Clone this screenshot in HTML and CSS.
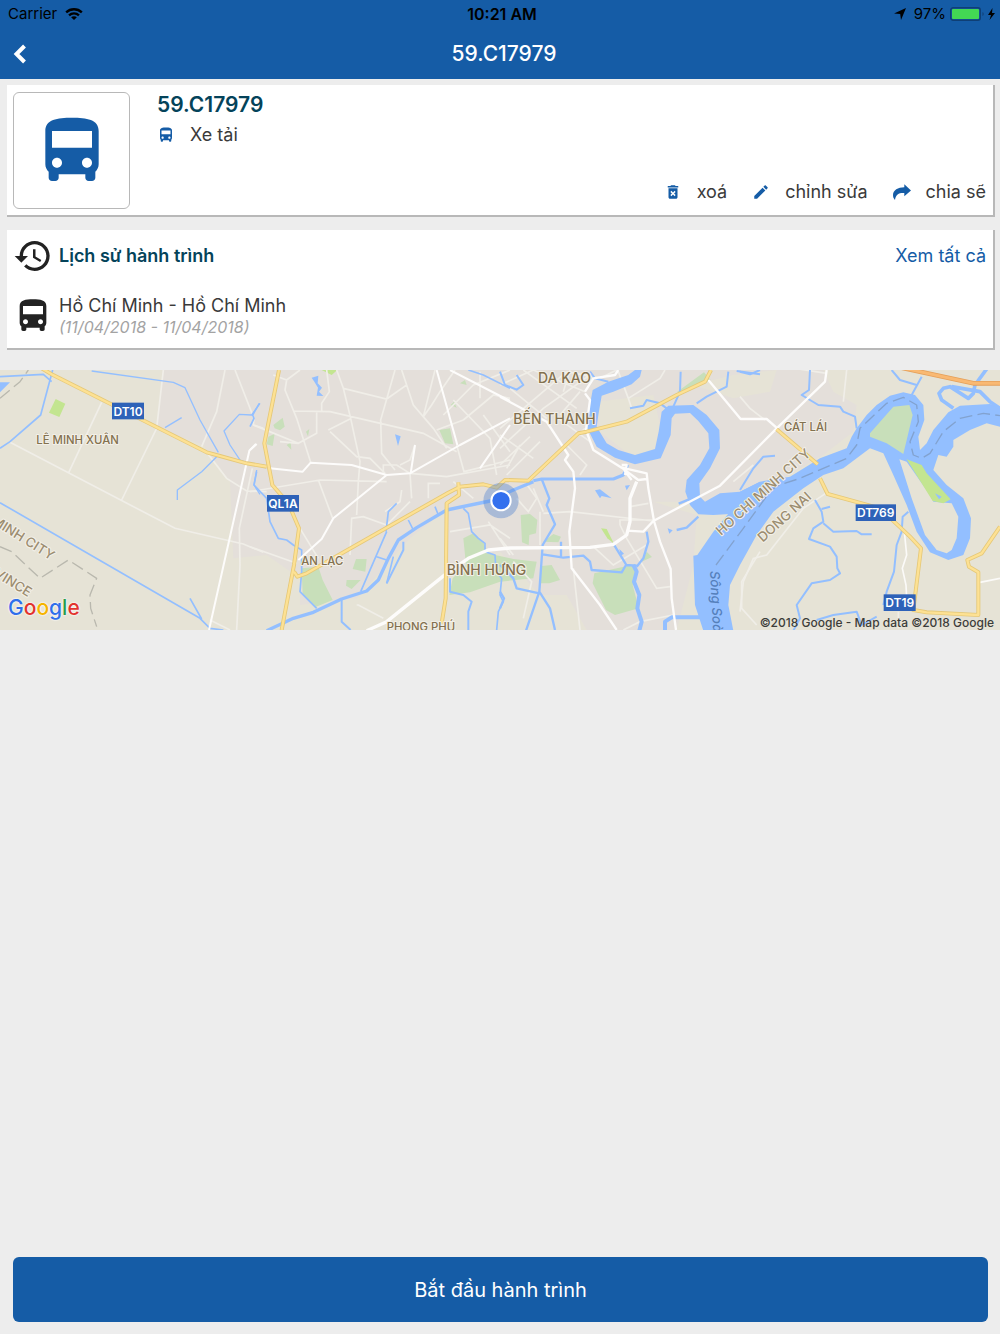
FILE: index.html
```html
<!DOCTYPE html>
<html lang="vi">
<head>
<meta charset="utf-8">
<meta name="viewport" content="width=device-width, initial-scale=1">
<title>59.C17979</title>
<link rel="stylesheet" href="styles.css">
</head>
<body>
<svg class="symbols" aria-hidden="true">
  <symbol id="bus" viewBox="0 0 24 24"><path d="M4 16c0 .88.39 1.67 1 2.22V20c0 .55.45 1 1 1h1c.55 0 1-.45 1-1v-1h8v1c0 .55.45 1 1 1h1c.55 0 1-.45 1-1v-1.780c.61-.55 1-1.340 1-2.220V6c0-3.500-3.580-4-8-4s-8 .5-8 4v10zm3.500 1c-.83 0-1.500-.67-1.500-1.500S6.670 14 7.500 14s1.500.67 1.500 1.500S8.330 17 7.500 17zm9 0c-.83 0-1.500-.67-1.500-1.500s.67-1.500 1.500-1.500 1.500.67 1.500 1.500-.67 1.500-1.500 1.500zm1.500-6H6V6h12v5z"/></symbol>
  <symbol id="history" viewBox="0 0 24 24"><path d="M13 3c-4.970 0-9 4.030-9 9H1l3.890 3.890.07.14L9 12H6c0-3.870 3.130-7 7-7s7 3.130 7 7-3.130 7-7 7c-1.930 0-3.680-.79-4.940-2.060l-1.420 1.420C8.270 19.990 10.510 21 13 21c4.970 0 9-4.030 9-9s-4.030-9-9-9zm-1 5v5l4.280 2.540.72-1.210-3.500-2.080V8H12z"/></symbol>
  <symbol id="trash" viewBox="0 0 24 24"><path d="M6 19c0 1.100.9 2 2 2h8c1.100 0 2-.9 2-2V7H6v12zm2.460-7.120l1.410-1.410L12 12.590l2.120-2.120 1.410 1.410L13.410 14l2.120 2.120-1.410 1.410L12 15.410l-2.120 2.120-1.410-1.410L10.590 14l-2.130-2.120zM15.500 4l-1-1h-5l-1 1H5v2h14V4z"/></symbol>
  <symbol id="pencil" viewBox="0 0 24 24"><path d="M3 17.250V21h3.750L17.810 9.940l-3.750-3.750L3 17.250zM20.710 7.040c.39-.39.39-1.020 0-1.410l-2.340-2.340c-.39-.39-1.020-.39-1.410 0l-1.830 1.830 3.750 3.750 1.830-1.830z"/></symbol>
  <symbol id="share" viewBox="0 0 18 18"><path d="M11.300 1.200L18 7.400l-6.700 5.800V10C6.500 9.600 2.700 11 2 17 .6 15.500 0 14 0 12 0 7 5 4.200 11.300 4.200z"/></symbol>
</svg>

<div class="screen">
  <header class="top">
    <div class="status">
      <div class="status-side">
        <span>Carrier</span>
        <svg class="wifi" viewBox="0 0 20 14" aria-hidden="true"><g fill="none" stroke="currentColor" stroke-width="2.600"><path d="M1.300 5.200C6.200.6 13.800.6 18.700 5.200"/><path d="M4.500 8.500C7.600 5.600 12.400 5.600 15.500 8.500"/></g><path d="M6.800 10.500C8.500 9 11.500 9 13.200 10.500L10 13.700z"/></svg>
      </div>
      <span class="status-time">10:21 AM</span>
      <div class="status-side status-end">
        <svg class="locate" viewBox="0 0 12 12" aria-hidden="true"><path d="M12 0L7 12 6.200 6 0 5.500z"/></svg>
        <span>97%</span>
        <svg class="battery" viewBox="0 0 46 14" aria-hidden="true"><rect x=".7" y=".7" width="29.600" height="12.600" rx="2.500" fill="none" stroke="#0f3f75" stroke-width="1.400"/><rect x="2" y="2" width="27" height="10" rx="1" fill="#43d854"/><path d="M32.500 5c1.600.8 1.600 3.200 0 4z" fill="#0f3f75"/><path d="M42.500 1L38 8h3l-1.500 5 5.500-7h-3z"/></svg>
      </div>
    </div>
    <div class="nav">
      <button class="back" type="button" aria-label="Back"><svg viewBox="0 0 14 20"><path d="M11.500 2L3.500 10l8 8" fill="none" stroke="#fff" stroke-width="4"/></svg></button>
      <h1>59.C17979</h1>
    </div>
  </header>

  <main class="content">
    <section class="card vehicle">
      <div class="thumb"><svg><use href="#bus"/></svg></div>
      <div class="vehicle-body">
        <h2>59.C17979</h2>
        <p class="kind"><svg class="icon"><use href="#bus"/></svg>Xe tải</p>
        <div class="actions">
          <button type="button"><svg class="icon"><use href="#trash"/></svg>xoá</button>
          <button type="button"><svg class="icon"><use href="#pencil"/></svg>chỉnh sửa</button>
          <button type="button"><svg class="icon"><use href="#share"/></svg>chia sẽ</button>
        </div>
      </div>
    </section>

    <section class="card history">
      <div class="row">
        <svg class="row-icon"><use href="#history"/></svg>
        <h3>Lịch sử hành trình</h3>
        <a href="#all">Xem tất cả</a>
      </div>
      <div class="row">
        <svg class="row-icon"><use href="#bus"/></svg>
        <div class="trip">
          <p>Hồ Chí Minh - Hồ Chí Minh</p>
          <p class="dates">(11/04/2018 - 11/04/2018)</p>
        </div>
      </div>
    </section>

    <section class="map" aria-label="Map">
      <svg class="map-canvas" viewBox="0 15 3000 780" preserveAspectRatio="xMidYMid slice">
        <rect class="land" y="15" width="3000" height="780"/>
        <path class="urban" d="M490 15L470 190 610 240 690 350 700 580 800 570 900 640 900 720 1070 700 1170 590 1330 440 1340 600 1500 560 1620 690 1700 690 1760 795H2030L2080 600 2090 450 1960 410H2200L2350 340 2470 270 2560 200 2570 120 2500 80 2470 15z"/>
        <path class="land" d="M1790 110L1960 90 1980 180 1960 270 1890 270 1800 200zM2080 60L2200 30 2330 15 2310 80 2200 100z"/>
        <path class="land" d="M1330 440L1230 520 1080 690 1060 795H1300L1340 590zM1500 650L1560 690 1590 760 1730 795H1340V700z"/>

        <!-- Parks -->
        <g class="park">
          <path class="lime" d="M167 102L196 116 178 156 147 143z"/>
          <g transform="translate(750)">
            <path d="M70 180L98 158 104 185 90 196 74 190zM55 215L74 206 68 243 50 238zM110 240L122 232 124 254zM168 200L178 192 174 214z"/>
            <path d="M155 610L205 605 218 645 248 705 195 727 158 690zM318 582L350 582 346 620 308 612zM290 645L332 645 305 672 288 662zM568 195L600 190 610 238 585 235z"/>
            <path d="M640 520L670 505 700 530 712 565 790 582 860 590 850 640 750 650 660 682 598 690 608 640 648 600z"/>
            <path d="M630 55L645 45 650 60zM602 120L612 110 620 128z"/>
            <path class="lime" d="M215 15H262L245 30z"/>
          </g>
          <g transform="translate(1500)">
            <path d="M62 450L90 447 112 465 108 505 88 510 86 540 66 532zM130 530L160 507 183 515 175 532zM125 603L155 600 180 645 148 655 118 655z"/>
            <path d="M283 625L405 598 408 640 398 660 416 730 345 750 318 735 278 655zM532 80L612 22 632 45 540 88zM425 590L440 560 456 576z"/>
            <path class="lime" d="M303 490L320 492 342 536 322 520z"/>
          </g>
        </g>

        <!-- Minor streets -->
        <g class="street">
          <path d="M30 232L525 490 730 537 790 562M305 112L205 325M490 15L470 190 365 405M675 15L650 140 605 245M705 15L762 160 760 180 790 190M620 262L680 340 740 378 800 380M757 310L718 490 720 600 710 795M630 765L690 795"/>
          <g transform="translate(750)">
            <path d="M70 30L110 45 150 15M110 45L105 75 140 160 182 292M130 138L240 140 520 205 620 260M230 15L238 80 215 115 215 140M260 15L280 70 302 160 330 290 325 350 320 450M280 70L410 102 470 60 455 15M200 140L200 205 145 235 10 180M300 162L235 195M145 235L90 230M240 200L320 275 360 280 405 325M435 15L392 165 395 265 435 315M470 60L490 120 550 190 590 250M450 300L480 285 495 240M480 325L485 400M545 120L520 155 555 15M615 15L570 80 545 120M610 105L720 220 740 330M580 150L670 60 780 15M640 165L730 90 780 100M560 195L640 165M620 240L642 320 780 285M690 20L690 100M700 150L780 260M0 380L210 345 410 350M205 345L248 460M300 570L305 460 340 455 410 480 480 410M150 490L205 580M0 545L140 595M320 720L325 720 400 760M600 500L720 480 780 520M535 400V355H570M610 350L670 400M715 470L780 570"/>
            <path d="M400 325L400 300 440 300 480 325 590 335 780 300M455 375L450 410 405 440"/>
          </g>
          <g transform="translate(1500)">
            <path d="M0 190L200 20M0 250L130 130 270 30M70 15L230 130M30 70L140 160M0 300L90 215M20 330L120 230M0 60L100 15M100 15L255 80M200 20L300 40 350 15M60 240L20 310M240 80L180 150M255 190L200 240 130 310M210 15L190 80M0 210L100 280M200 240L260 300 240 330M175 160L270 230M75 350L110 400 85 440 50 400M0 520L40 570M120 440V540M130 445L210 440 460 468M390 425L445 415M355 20L385 100 395 130M385 100L480 40 495 15M360 480V465H460M360 480L380 520 470 670 510 665M280 545L340 600 440 540M100 370L130 440M70 760L95 650 40 590M220 610L240 795M370 795L420 770 520 750M780 560L725 650 725 730 770 780M760 300L700 350"/>
          </g>
          <g transform="translate(2220)">
            <path d="M0 95L30 130 75 165M100 0L260 25M320 15L310 110M265 380L190 430 80 570 40 580 10 650 0 740M475 790V740"/>
            <path class="minor-bright" d="M493 500L500 570 487 610 498 660 500 700M720 652L780 640"/>
          </g>
        </g>

        <!-- Canals and rivers -->
        <g class="water">
          <path class="fill" d="M0 52H30L0 82z"/>
          <path d="M158 15L122 150 30 230 0 250M0 35L130 28 155 50" stroke-width="5"/>
          <path d="M0 413L600 760M570 700L605 762M600 760L630 790 670 795" stroke-width="5"/>
          <path d="M275 18L520 52 555 68 600 165 655 262M650 275L605 320 532 375V405M495 188L545 158M780 115L755 150 718 148 672 198 690 240 720 285 760 300M770 315L762 360 780 388" stroke-width="4"/>
          <g transform="translate(750)">
            <path class="fill" d="M185 38L205 32 203 55 216 68 207 80 220 93 200 92 204 68 193 50zM435 208L452 214 444 243z"/>
            <path d="M28 115L8 150 12 160 0 185M20 320L12 360 50 400 60 470 85 520 110 525 130 540 155 555 155 620M155 620L150 680 200 730M430 575L410 655M440 415L415 440 408 500M410 500L332 680M475 465L490 495M555 425L565 450M380 575L410 585M640 430L655 445 665 500 685 520 705 535 705 560 735 570 738 620 755 640 750 690 760 710 745 740 740 795M655 15L700 30 780 70" stroke-width="5"/>
            <path d="M600 640V680L640 690 665 710 655 740 655 795M460 530V555L410 655M275 705V770L302 795" stroke-width="6"/>
            <path d="M50 797L130 760 190 742 275 702 350 678 385 645 415 580 445 525 500 488 590 435 720 408 790 375 850 350" stroke-width="10"/>
          </g>
          <g transform="translate(1500)">
            <path class="fill" d="M285 376L300 373 335 400 305 393 300 400zM375 362L390 360 380 376zM503 490L518 496 508 506zM358 552L372 566 362 572z"/>
            <path d="M0 20L15 60 50 74 70 60 50 30M270 20L285 40 325 50M542 20L540 80 520 125M390 130L430 122 440 105 480 115 500 130M590 115L620 95 680 65 685 20M710 18L780 28" stroke-width="6"/>
            <path d="M100 347L125 342H340L370 330 383 300" stroke-width="9"/>
            <path d="M125 342L148 400 140 420 165 478 128 540 118 680 78 797M118 680L150 730 165 795M0 600L40 640 50 670 118 685M128 568L190 578 250 572 270 590 275 615 365 622 378 600 410 602M183 530V578M340 536L378 598M440 500L445 530 430 580 410 605M0 680L12 700 0 730" stroke-width="7"/>
            <path d="M400 600L410 620 402 650 418 690 412 730 425 770 418 797M495 797V770L515 757H600" stroke-width="12"/>
            <path d="M536 416L580 398M530 495L560 488 595 455" stroke-width="7"/>
            <path class="fill" d="M425 15L420 35 395 58 340 80 305 92 295 150 290 185 320 235 355 255 405 270 465 252 476 200 485 140 505 122 580 120 620 150 658 195 660 250 630 310 598 355 600 395 615 410 660 385 720 380 780 350 760 430 690 447 640 450 595 448 570 420 556 380 560 345 600 300 628 250 625 205 595 168 570 144 525 146 515 160 512 210 482 280 405 298 345 278 290 245 262 190 268 130 278 75 325 50 385 30 405 15z"/>
          </g>
          <g transform="translate(2220)">
            <path class="fill" d="M-140 572L-128 570-80 500-30 440 0 380 60 350 150 335 240 280 320 250 335 215 350 190 380 150 410 120 450 92 490 82 525 90 550 120 553 165 535 215 540 255 560 235 580 195 625 142 660 122 750 117 800 130V190L740 175 690 195 640 225V245L620 275 595 270 580 315 620 360 670 400 693 460 690 520 670 570 625 585 570 562 530 500 500 420 460 330 430 265 390 250 350 280 310 310 250 330 190 370 100 440 50 510 0 600-30 660-35 720-20 797H-110L-135 720z"/>
            <path d="M210 15L207 75 185 90 235 120 300 125 310 140 345 155 350 190M455 15L480 45 530 60M545 35L515 90M0 375L40 310 70 275 105 272M225 405L245 440 250 470 220 490 207 522 270 545 290 575 292 610 300 625 270 645 215 655 170 720 180 760 160 797M250 475L280 500 350 498 365 508H395M245 432L270 425M505 440L488 455 485 500 470 540 462 620 440 680 430 720M230 765L280 750 350 740 365 780 410 755M0 20L30 28 60 15" stroke-width="6"/>
            <path d="M640 130L605 105 597 85 610 70 630 65 685 100 700 85 705 60 740 12M635 65L720 80 750 110 780 130" stroke-width="11"/>
          </g>
        </g>
        <g class="park" transform="translate(2220)">
          <path d="M390 205L460 125 508 120 518 150 490 267 440 235 390 215z"/>
          <path class="isle" d="M478 283L500 290 570 390 580 410 635 415 655 455 650 520 635 555 620 565 590 555 555 510 515 400z"/>
          <path class="lime" d="M500 283L545 300 560 325 632 403 610 415 578 408z"/>
          <path class="pond" d="M585 385L605 395 597 403z"/>
        </g>

        <!-- Main roads -->
        <g class="road">
          <path d="M768 237L748 257 627 795" stroke-width="6"/>
          <g transform="translate(750)">
            <path d="M60 310L158 320 182 293 305 300 410 330 480 325 630 240 780 160M410 330L250 460 215 522 145 585M560 15L622 240M600 15L780 108M495 240L482 325M690 310L780 180M0 255L20 237" stroke-width="6"/>
            <path d="M350 797L410 770 590 625 655 580 715 555 780 549 1020 547 1090 538 1130 510 1140 470V400L1160 350" stroke-width="10"/>
          </g>
          <g transform="translate(1500)">
            <path d="M255 85L270 105 258 195 280 255 365 308 440 325 445 370 462 468 480 530 512 612 515 700 528 795M365 308L415 345 440 342M372 315L395 345M0 95L140 170 205 270 195 285 220 320 225 370 208 500 215 610 300 720 350 795M365 300L380 300 375 330M625 45L722 162H800L832 190M380 497L430 500 460 468 660 362 830 190 975 50 980 15M355 15L345 30 280 40 255 80" stroke-width="7"/>
          </g>
        </g>
        <g class="highway-case"><path id="roads" d="M125 10L155 28 620 262 660 273 740 295 800 305M837 15L793 235 817 360 865 415 897 490 882 600 845 795M882 620L892 635 920 625 1345 383 1380 365 1450 358 1490 368 1515 345 1585 347 1735 205 1760 200 1880 170 2030 90 2115 50 2133 15M1375 352L1377 390 1340 415 1337 700 1325 775M2330 193L2453 298M2460 340L2483 387 2640 430 2730 515 2763 550 2740 735 2780 742 2935 750V622L2907 605 2902 585 2945 565 3000 485"/></g>
        <use class="highway" href="#roads"/>
        <path class="trunk-case" d="M2690 5L2920 55H3000"/>
        <path class="trunk" d="M2690 5L2920 55H3000"/>

        <!-- Borders -->
        <path class="border" d="M0 100L60 50 85 15M0 545L35 560 120 640 205 585 290 640 270 690 272 730 290 785"/>
        <path class="border river-line" d="M2148 600L2230 490 2310 380 2330 363 2400 340 2540 280 2570 240 2580 190 2660 115 2710 97 2750 120 2755 170 2730 230 2740 270 2765 280 2790 265 2830 200 2880 160 2950 145 3000 152"/>

        <!-- Place names -->
        <g class="place">
          <text x="109" y="237">LÊ MINH XUÂN</text>
          <text x="904" y="601">AN LẠC</text>
          <text x="2352" y="199">CÁT LÁI</text>
          <text x="1160" y="799">PHONG PHÚ</text>
          <g class="district">
            <text x="1614" y="55">DA KAO</text>
            <text x="1540" y="177">BẾN THÀNH</text>
            <text x="1340" y="630">BÌNH HƯNG</text>
          </g>
          <g class="province">
            <text transform="translate(-28 474) rotate(32)">MINH CITY</text>
            <text transform="translate(-20 632) rotate(32)">VINCE</text>
            <text transform="translate(2163 513) rotate(-42)">HO CHI MINH CITY</text>
            <text transform="translate(2288 533) rotate(-42)">DONG NAI</text>
          </g>
          <text class="river" transform="translate(2130 618) rotate(87)">Sông Soài Rạp</text>
        </g>

        <!-- Road shields -->
        <g class="shield">
          <rect x="336" y="113" width="96" height="50"/><text x="384" y="152">DT10</text>
          <rect x="801" y="390" width="96" height="50"/><text x="849" y="429">QL1A</text>
          <rect x="2567" y="418" width="121" height="50"/><text x="2627" y="457">DT769</text>
          <rect x="2651" y="688" width="96" height="50"/><text x="2699" y="727">DT19</text>
        </g>

        <!-- Current position -->
        <circle cx="1503" cy="407" r="53" fill="#4a7fd0" fill-opacity=".38"/>
        <circle cx="1503" cy="407" r="29" fill="#3370ee" stroke="#fff" stroke-width="6"/>
      </svg>
      <span class="logo"><span class="g-blue">G</span><span class="g-red">o</span><span class="g-yellow">o</span><span class="g-blue">g</span><span class="g-green">l</span><span class="g-red">e</span></span>
      <span class="credit">©2018 Google - Map data ©2018 Google</span>
    </section>
  </main>

  <footer class="bottom">
    <button class="start" type="button">Bắt đầu hành trình</button>
  </footer>
</div>
</body>
</html>
```
FILE: styles.css
```css
* {
  box-sizing: border-box;
}

body {
  margin: 0;
  background: #ededed;
  color: #3a3a3a;
  font-family: Inter, "Liberation Sans", sans-serif;
  font-size: 18px;
  line-height: 22px;
}

h1,
h2,
h3,
p {
  margin: 0;
}

button {
  padding: 0;
  border: 0;
  background: none;
  color: inherit;
  font: inherit;
  cursor: pointer;
}

svg {
  display: block;
  flex: none;
  fill: currentColor;
}

.symbols {
  position: absolute;
  width: 0;
  height: 0;
}

.screen {
  display: flex;
  flex-direction: column;
  min-height: 100vh;
}

.top {
  background: #155ca6;
}

.status {
  display: grid;
  grid-template-columns: 1fr auto 1fr;
  align-items: center;
  height: 28px;
  padding: 0 4px 0 8px;
  color: #000;
  font-size: 15px;
}

.status-side {
  display: flex;
  align-items: center;
  gap: 8px;
}

.status-end {
  justify-content: flex-end;
  gap: 4px;
}

.status-time {
  font-size: 16px;
  font-weight: 600;
}

.wifi {
  width: 18px;
  height: 14px;
}

.locate {
  width: 12px;
  height: 12px;
  margin-right: 4px;
}

.battery {
  width: 46px;
  height: 14px;
}

.nav {
  display: grid;
  grid-template-columns: 40px 1fr 32px;
  align-items: center;
  height: 51px;
  color: #fff;
}

.nav h1 {
  font-size: 21px;
  font-weight: 500;
  text-align: center;
}

.back {
  display: flex;
  align-items: center;
  justify-content: center;
  height: 40px;
}

.back svg {
  width: 14px;
  height: 20px;
}

.content {
  flex: 1;
}

.card {
  margin: 6px 5px 0 7px;
  border: solid #b8b8b8;
  border-width: 0 2px 2px 0;
  background: #fff;
}

.vehicle {
  display: flex;
  gap: 27px;
  padding: 7px 7px 6px 6px;
}

.thumb {
  display: flex;
  align-items: center;
  justify-content: center;
  width: 117px;
  height: 117px;
  border: 1px solid #b8b8b8;
  border-radius: 6px;
  color: #155ca6;
}

.thumb svg {
  width: 80px;
  height: 80px;
}

.vehicle-body {
  display: flex;
  flex: 1;
  flex-direction: column;
}

.vehicle h2 {
  color: #04435a;
  font-size: 21px;
  font-weight: 600;
  line-height: 26px;
}

.icon {
  width: 18px;
  height: 18px;
  color: #155ca6;
}

.kind {
  display: flex;
  align-items: center;
  gap: 15px;
  margin-top: 6px;
}

.actions {
  display: flex;
  flex-wrap: wrap;
  justify-content: flex-end;
  gap: 25px;
  margin-top: auto;
  padding-bottom: 6px;
}

.actions button {
  display: flex;
  align-items: center;
  gap: 15px;
}

.history {
  margin-top: 13px;
  padding: 6px 7px 11px 6px;
}

.row {
  display: flex;
  align-items: center;
  gap: 6px;
}

.row + .row {
  margin-top: 19px;
}

.row-icon {
  width: 40px;
  height: 40px;
  color: #222;
}

.row h3 {
  flex: 1;
  color: #04435a;
  font-size: 18px;
  font-weight: 600;
}

.row a {
  color: #155ca6;
  text-decoration: none;
}

.dates {
  color: #a3a3a3;
  font-size: 16px;
  font-style: italic;
  line-height: 20px;
}

.map {
  position: relative;
  height: 260px;
  margin-top: 20px;
}

.map-canvas {
  width: 100%;
  height: 100%;
}

.land,
.park .isle {
  fill: #e6e3d6;
}

.urban {
  fill: #e4dfda;
}

.park {
  fill: #c8dfba;
}

.park .lime {
  fill: #c3e590;
}

.park .pond {
  fill: #93bfff;
}

.street {
  fill: none;
  stroke: #f0eee8;
  stroke-width: 5;
}

.minor-bright {
  stroke: #fbfaf8;
}

.water {
  fill: none;
  stroke: #93bfff;
  stroke-linejoin: round;
}

.water .fill {
  fill: #93bfff;
  stroke: none;
}

.road {
  fill: none;
  stroke: #fdfcfb;
  stroke-linejoin: round;
}

.highway-case,
.highway,
.trunk-case,
.trunk,
.border {
  fill: none;
  stroke-linejoin: round;
}

.highway-case {
  stroke: #e5c878;
  stroke-width: 12;
}

.highway {
  stroke: #fde193;
  stroke-width: 7;
}

.trunk-case {
  stroke: #e5a05a;
  stroke-width: 14;
}

.trunk {
  stroke: #f9b973;
  stroke-width: 9;
}

.border {
  stroke: #b9b8ae;
  stroke-width: 4;
  stroke-dasharray: 38 16;
}

.river-line {
  stroke: #82a2cf;
}

.place {
  fill: #83714f;
  stroke: #f3f0e8;
  stroke-width: 6;
  stroke-linejoin: round;
  paint-order: stroke;
  font-size: 34px;
  font-weight: 500;
}

.district {
  font-size: 42px;
}

.province {
  fill: #9c8d70;
  font-size: 40px;
}

.river {
  fill: #5580bb;
  stroke: none;
  font-size: 40px;
  font-style: italic;
}

.shield {
  fill: #2e62b8;
}

.shield text {
  fill: #fff;
  font-size: 36px;
  font-weight: 600;
  text-anchor: middle;
}

.logo,
.credit {
  position: absolute;
  bottom: 0;
}

.logo {
  left: 8px;
  bottom: 10px;
  font-size: 21px;
  font-weight: 500;
  line-height: 24px;
  text-shadow: 0 0 2px #fff, 0 0 2px #fff;
}

.g-blue {
  color: #2f6fea;
}

.g-red {
  color: #e2332e;
}

.g-yellow {
  color: #f5b400;
}

.g-green {
  color: #2a9d48;
}

.credit {
  right: 6px;
  color: #3d3d3a;
  font-size: 12px;
  font-weight: 500;
  line-height: 14px;
}

.bottom {
  padding: 12px 12px 12px 13px;
}

.start {
  width: 100%;
  height: 65px;
  border-radius: 6px;
  background: #155ca6;
  color: #fff;
  font-size: 20px;
}
```
